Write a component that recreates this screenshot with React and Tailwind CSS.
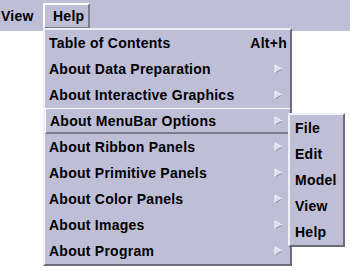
import React from "react";

const pat = "bg-[#bebed6]";

function Arrow() {
  return (
    <svg width="9" height="10" viewBox="0 0 9 10" className="shrink-0">
      <polygon points="1,1 8,5 1,9" fill="#dcdcec" />
      <polyline points="1,9 8,5" stroke="#8a8a9a" strokeWidth="1" fill="none" />
      <polyline points="1,9 1,1 8,5" stroke="#f4f4fa" strokeWidth="1" fill="none" />
    </svg>
  );
}

const items = [
  ["Table of Contents", "Alt+h"],
  ["About Data Preparation"],
  ["About Interactive Graphics"],
  ["About MenuBar Options", null, true],
  ["About Ribbon Panels"],
  ["About Primitive Panels"],
  ["About Color Panels"],
  ["About Images"],
  ["About Program"],
];

export default function App() {
  return (
    <div
      className="relative w-[350px] h-[271px] bg-white overflow-hidden text-black font-bold text-[14px] tracking-[0.25px]"
      style={{ fontFamily: '"Liberation Sans", Arial, sans-serif' }}
    >
      <div className={`h-[31px] flex items-center ${pat}`}>
        <div className="pl-[1px] w-[43px] leading-none">View</div>
        <div className="h-[26px] w-[47px] flex items-center pl-[8px] border-2 border-t-white border-l-white border-r-[#7c7c8c] border-b-[#7c7c8c] leading-none">
          Help
        </div>
      </div>

      <div
        className={`absolute left-[43px] top-[28px] w-[249px] ${pat} border-2 border-t-[#f0f0f8] border-l-[#f0f0f8] border-r-[#6c6c7c] border-b-[#6c6c7c] flex flex-col`}
      >
        {items.map(([label, acc, hl], i) => (
          <div
            key={i}
            className={`h-[26px] flex items-center justify-between pl-[4px] pr-[7px] ${
              hl ? "border-t border-l border-t-white border-l-white border-b-2 border-b-[#7c7c8c]" : ""
            }`}
          >
            <span className="leading-none">{label}</span>
            {acc ? <span className="leading-none -mr-[4px]">{acc}</span> : <Arrow />}
          </div>
        ))}
      </div>

      <div
        className={`absolute left-[288px] top-[113px] w-[57px] ${pat} border-2 border-t-[#f0f0f8] border-l-[#f0f0f8] border-r-[#6c6c7c] border-b-[#6c6c7c] flex flex-col`}
      >
        {["File", "Edit", "Model", "View", "Help"].map((s) => (
          <div key={s} className="h-[26px] flex items-center pl-[5px] leading-none">
            {s}
          </div>
        ))}
      </div>
    </div>
  );
}
